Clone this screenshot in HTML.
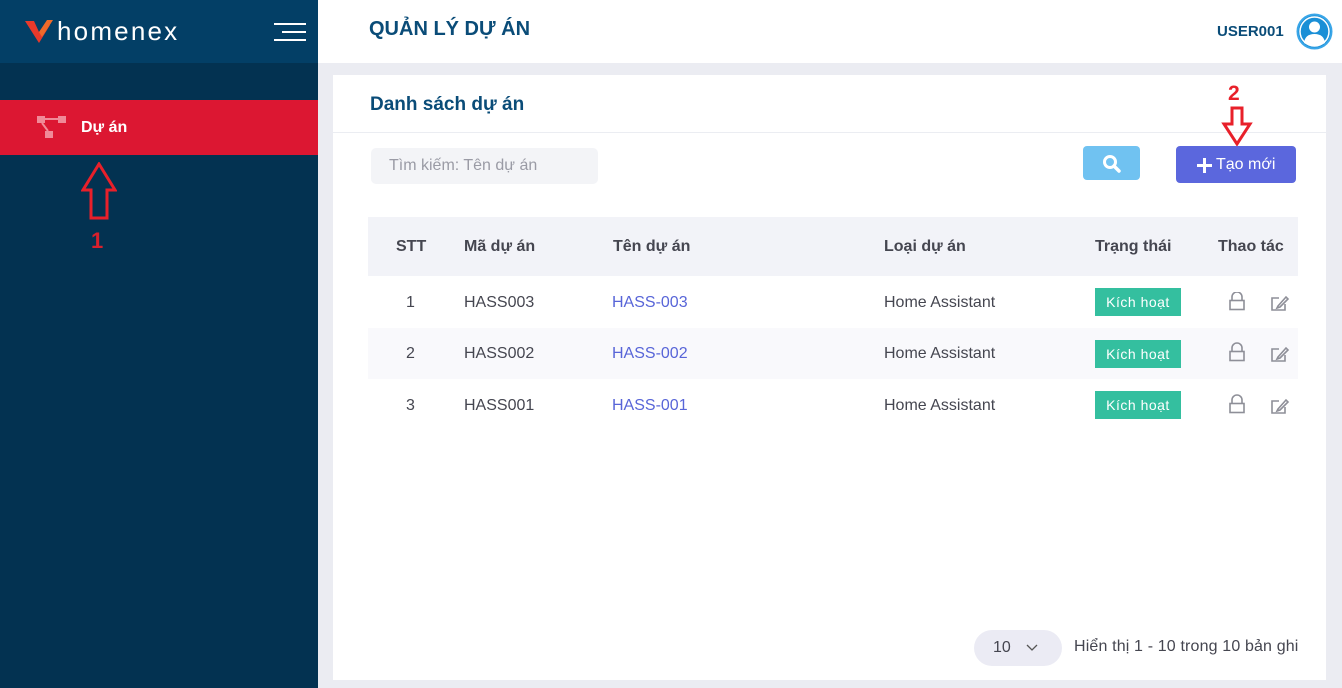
<!DOCTYPE html><html><head><meta charset="utf-8"><style>
*{margin:0;padding:0;box-sizing:border-box}
body{width:1342px;height:688px;position:relative;overflow:hidden;font-family:"Liberation Sans","Noto Sans CJK SC",sans-serif;background:#ebecf2}
.abs{position:absolute}
.side{left:0;top:0;width:318px;height:688px;background:#033251}
.logo{left:0;top:0;width:318px;height:63px;background:#033f66}
.top{left:318px;top:0;width:1024px;height:63px;background:#fff}
.card{left:333px;top:75px;width:993px;height:605px;background:#fff}
.row{position:absolute;left:368px;width:930px;font-size:16px;color:#454650}
.row span{position:absolute}
.badge{position:absolute;left:727px;width:86px;height:28px;background:#34bf9f;color:#fff;font-size:14px;text-align:center;line-height:28px;letter-spacing:.5px}
</style></head><body>
<div class="abs side"></div>
<div class="abs logo">
<svg class="abs" style="left:25px;top:20px" width="30" height="24" viewBox="0 0 30 24"><path d="M0 1 L9 1 L14 12 L20 5 L25 5 L14 23 Z" fill="#e8392b"/><path d="M14 12 L22 0 L28 0 L17 17Z" fill="#f06a2a"/></svg>
<div class="abs" style="left:57px;top:16px;color:#fff;font-size:26px;letter-spacing:2.2px">homenex</div>
<div class="abs" style="left:274px;top:23px;width:32px;height:2px;background:#fff"></div>
<div class="abs" style="left:282px;top:31px;width:24px;height:2px;background:#fff"></div>
<div class="abs" style="left:274px;top:39px;width:32px;height:2px;background:#fff"></div>
</div>
<div class="abs" style="left:0;top:100px;width:318px;height:55px;background:#dc1732"></div>
<svg class="abs" style="left:37px;top:116px" width="30" height="23" viewBox="0 0 30 23"><rect x="0" y="0" width="8" height="7" fill="#f08a98"/><rect x="21" y="0" width="8" height="7" fill="#f08a98"/><rect x="8" y="15" width="8" height="7" fill="#f08a98"/><path d="M8 3H21M5 7L11 15" stroke="#f08a98" stroke-width="2"/></svg>
<div class="abs" style="left:81px;top:119px;color:#fff;font-weight:bold;font-size:16px">Dự án</div>
<svg class="abs" style="left:81px;top:162px" width="36" height="58" viewBox="0 0 36 58"><path d="M18 2 L34 28 L26 28 L26 56 L10 56 L10 28 L2 28 Z" fill="none" stroke="#e8202a" stroke-width="3"/></svg>
<div class="abs" style="left:91px;top:228px;color:#d9202c;font-weight:bold;font-size:22px">1</div>
<div class="abs top"></div>
<div class="abs" style="left:369px;top:18px;color:#0a4c78;font-weight:bold;font-size:20px">QUẢN LÝ DỰ ÁN</div>
<div class="abs" style="left:1217px;top:23px;color:#0a4c78;font-weight:bold;font-size:15px">USER001</div>
<svg class="abs" style="left:1296px;top:13px" width="37" height="37" viewBox="0 0 37 37"><circle cx="18.5" cy="18.5" r="17" fill="#1a8fd6" stroke="#3aa6e8" stroke-width="2"/><circle cx="18.5" cy="18.5" r="14.5" fill="none" stroke="#fff" stroke-width="1.5"/><circle cx="18.5" cy="14" r="5.5" fill="#fff"/><path d="M8 30 Q9 21 18.5 21 Q28 21 29 30 Q18.5 36 8 30Z" fill="#fff"/></svg>
<div class="abs card"></div>
<div class="abs" style="left:370px;top:94px;color:#0a4c78;font-weight:bold;font-size:19px">Danh sách dự án</div>
<div class="abs" style="left:333px;top:132px;width:993px;height:1px;background:#ebedf2"></div>
<div class="abs" style="left:1228px;top:82px;color:#e8202a;font-weight:bold;font-size:21px">2</div>
<svg class="abs" style="left:1221px;top:106px" width="32" height="40" viewBox="0 0 32 40"><path d="M11 2 L21 2 L21 18 L29 18 L16 38 L3 18 L11 18 Z" fill="none" stroke="#e8202a" stroke-width="3"/></svg>
<div class="abs" style="left:371px;top:148px;width:227px;height:36px;background:#f3f4f7;border-radius:5px;color:#9a9ba5;font-size:16px;line-height:36px;padding-left:18px">Tìm kiếm: Tên dự án</div>
<div class="abs" style="left:1083px;top:146px;width:57px;height:34px;background:#70c2f1;border-radius:4px"></div>
<svg class="abs" style="left:1102px;top:154px" width="20" height="20" viewBox="0 0 20 20"><circle cx="8" cy="8" r="5.5" fill="none" stroke="#fff" stroke-width="3"/><path d="M12 12 L17 17" stroke="#fff" stroke-width="3.5" stroke-linecap="round"/></svg>
<div class="abs" style="left:1176px;top:146px;width:120px;height:37px;background:#5b67dd;border-radius:4px;color:#fff;font-size:16px;line-height:37px;padding-left:40px">Tạo mới</div>
<div class="abs" style="left:1197px;top:164px;width:15px;height:3px;background:#fff"></div>
<div class="abs" style="left:1203px;top:158px;width:3px;height:15px;background:#fff"></div>
<div class="row" style="top:218px;height:59px;background:#f2f3f8;font-weight:bold;line-height:59px;top:217px">
<span style="left:28px">STT</span><span style="left:96px">Mã dự án</span><span style="left:245px">Tên dự án</span><span style="left:516px">Loại dự án</span><span style="left:727px">Trạng thái</span><span style="left:850px">Thao tác</span></div>
<div class="row" style="top:277px;height:52px;line-height:52px"><span style="left:38px">1</span><span style="left:96px">HASS003</span><span style="left:244px;color:#5865d8">HASS-003</span><span style="left:516px">Home Assistant</span><div class="badge" style="top:11px">Kích hoạt</div></div>
<div class="row" style="top:328px;height:51px;line-height:52px;background:#f9f9fc"><span style="left:38px">2</span><span style="left:96px">HASS002</span><span style="left:244px;color:#5865d8">HASS-002</span><span style="left:516px">Home Assistant</span><div class="badge" style="top:12px">Kích hoạt</div></div>
<div class="row" style="top:380px;height:52px;line-height:52px"><span style="left:38px">3</span><span style="left:96px">HASS001</span><span style="left:244px;color:#5865d8">HASS-001</span><span style="left:516px">Home Assistant</span><div class="badge" style="top:11px">Kích hoạt</div></div>
<svg class="abs" style="left:1228px;top:292px" width="62" height="126" viewBox="0 0 62 126">
<g fill="none" stroke="#8e8f98" stroke-width="1.6">
<g id="a"><path d="M4 8 V5 a5 5 0 0 1 10 0 V8"/><rect x="2" y="8.5" width="14" height="9"/><path d="M51 6 H44 V18 H57 V12"/><path d="M50 14 L58 5 L60 7 L52 15 L49 16Z"/></g>
<use href="#a" y="51"/><use href="#a" y="103"/></g></svg>
<div class="abs" style="left:974px;top:630px;width:88px;height:36px;background:#ebebf4;border-radius:18px;font-size:16px;color:#454650;line-height:36px;padding-left:19px">10</div>
<svg class="abs" style="left:1025px;top:644px" width="14" height="8" viewBox="0 0 14 8"><path d="M2 1 L7 6 L12 1" fill="none" stroke="#555" stroke-width="1.3"/></svg>
<div class="abs" style="left:1074px;top:638px;font-size:16px;color:#454650;letter-spacing:.15px">Hiển thị 1 - 10 trong 10 bản ghi</div>
</body></html>
